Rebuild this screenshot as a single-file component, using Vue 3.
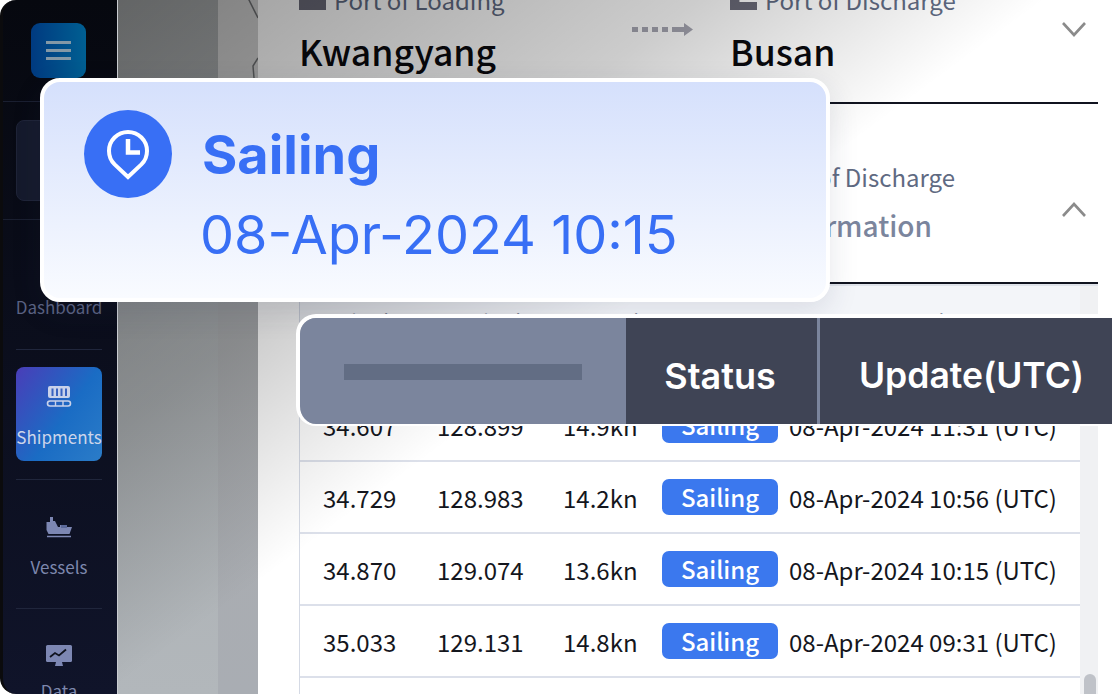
<script setup>
const rows = [
  { lat: '34.607', lon: '128.899', speed: '14.9kn', time: '08-Apr-2024 11:31 (UTC)' },
  { lat: '34.729', lon: '128.983', speed: '14.2kn', time: '08-Apr-2024 10:56 (UTC)' },
  { lat: '34.870', lon: '129.074', speed: '13.6kn', time: '08-Apr-2024 10:15 (UTC)' },
  { lat: '35.033', lon: '129.131', speed: '14.8kn', time: '08-Apr-2024 09:31 (UTC)' }
]
</script>

<template>
  <div class="screen">
    <aside class="sidebar">
      <div class="side-top">
        <div class="burger"><span></span><span></span><span></span></div>
      </div>
      <div class="side-box-wrap"><div class="side-box"></div></div>
      <div class="nav-item dash"><span>Dashboard</span></div>
      <div class="nav-item ship-wrap">
        <div class="active-tile">
          <svg width="26" height="22" viewBox="0 0 26 22" fill="none">
            <rect x="2" y="1" width="22" height="12" rx="2" fill="#c9d2ea"/>
            <path d="M6.5 3.5v7.5M11 3.5v7.5M15.5 3.5v7.5M20 3.5v7.5" stroke="#3a63c0" stroke-width="2"/>
            <rect x="1.5" y="16" width="23" height="5" rx="2.5" stroke="#c9d2ea" stroke-width="1.6"/>
            <path d="M9.5 16v5M17 16v5" stroke="#c9d2ea" stroke-width="1.4"/>
          </svg>
          <span>Shipments</span>
        </div>
      </div>
      <div class="nav-item vessels">
        <svg width="28" height="22" viewBox="0 0 28 22" fill="#7d87b3">
          <path d="M5 0h3v4h2l3 6h2V8h7v2h5l-2.500 7H3.500L1.500 13V5h3.500z"/>
          <rect x="16" y="8" width="6" height="3" fill="#5c6a9a"/>
          <path d="M2 19.500h24" stroke="#7d87b3" stroke-width="1.600" fill="none"/>
        </svg>
        <span>Vessels</span>
      </div>
      <div class="nav-item data">
        <svg width="28" height="24" viewBox="0 0 28 24">
          <rect x="1" y="1" width="26" height="17" rx="1.5" fill="#7d87b3"/>
          <path d="M5 13l5-4 4 2.500 7-6" stroke="#10131f" stroke-width="1.800" fill="none"/>
          <path d="M11 18h6l1 4h-8z" fill="#7d87b3"/>
        </svg>
        <span>Data</span>
      </div>
    </aside>

    <div class="map-a"></div>
    <div class="map-b">
      <svg class="map-lines" width="40" height="78" viewBox="0 0 40 78" fill="none">
        <path d="M30 -2l10 20M40 58l-5 8 1 12" stroke="#6e7072" stroke-width="1.500"/>
      </svg>
    </div>

    <main class="panel">
      <section class="route first">
        <div class="port">
          <div class="label"><i class="port-ic"></i>Port of Loading</div>
          <div class="name">Kwangyang</div>
        </div>
        <svg class="arrow" width="62" height="14" viewBox="0 0 62 14" fill="#a6a6b2">
          <rect x="0" y="5" width="6" height="5"/><rect x="10" y="5" width="6" height="5"/>
          <rect x="20" y="5" width="6" height="5"/><rect x="30" y="5" width="6" height="5"/>
          <path d="M40 5h12V1l9 6.500-9 6.500V10H40z"/>
        </svg>
        <div class="port second-port">
          <div class="label"><i class="port-ic mirror"></i>Port of Discharge</div>
          <div class="name">Busan</div>
        </div>
        <svg class="chev" width="26" height="18" viewBox="0 0 26 18" fill="none">
          <path d="M2 3l11 12L24 3" stroke="#8b8b8b" stroke-width="2.600"/>
        </svg>
      </section>

      <section class="route info">
        <div class="info-text">
          <div class="label">Port of Discharge</div>
          <div class="info-title">Information</div>
        </div>
        <svg class="chev up" width="26" height="18" viewBox="0 0 26 18" fill="none">
          <path d="M2 15L13 3l11 12" stroke="#8b8b8b" stroke-width="2.600"/>
        </svg>
      </section>

      <section class="table-wrap">
        <div class="table">
          <div class="thead">
            <span class="th-lat">Latitude</span>
            <span class="th-lon">Longitude</span>
            <span class="th-speed">Speed</span>
            <span class="th-status">Status</span>
            <span class="th-update">Update</span>
          </div>
          <div v-for="row in rows" :key="row.time" class="row">
            <span class="lat">{{ row.lat }}</span>
            <span class="lon">{{ row.lon }}</span>
            <span class="speed">{{ row.speed }}</span>
            <span class="badge">Sailing</span>
            <span class="time">{{ row.time }}</span>
          </div>
        </div>
        <div class="scroll"><div class="thumb"></div></div>
      </section>
    </main>

    <div class="shade"></div>

    <div class="float-card">
      <div class="pin-circle">
        <svg width="44" height="54" viewBox="0 0 44 54" fill="none">
          <path d="M22 50L8.600 37.400A19 19 0 1 1 35.400 37.400Z" stroke="#fff" stroke-width="4" stroke-linejoin="miter"/>
          <path d="M22 12v13.500h12" stroke="#fff" stroke-width="4.500"/>
        </svg>
      </div>
      <div class="float-text">
        <div class="float-status">Sailing</div>
        <div class="float-date">08-Apr-2024 10:15</div>
      </div>
    </div>

    <div class="float-head">
      <div class="head-blank"><div class="head-bar"></div></div>
      <div class="head-status">Status</div>
      <div class="head-update">Update(UTC)</div>
    </div>
  </div>
</template>

<style>
html, body { margin: 0; background: #fff; }
</style>

<style scoped>
.screen {
  position: relative;
  width: 1112px;
  height: 694px;
  overflow: hidden;
  display: flex;
  background: #fff;
  font-family: "Noto Sans CJK KR", "Noto Sans", sans-serif;
}
.sidebar {
  width: 118px;
  flex: none;
  height: 694px;
  box-sizing: border-box;
  padding: 0 15px 0 13px;
  border-right: 1px solid #c9ccd0;
  border-left: 3px solid #0b0b0d;
  background: linear-gradient(180deg, #06080f 0%, #10142a 100%);
  border-radius: 16px 0 0 16px;
  overflow: hidden;
  display: flex;
  flex-direction: column;
  color: #7d87ad;
}
.side-top {
  flex: none;
  border-bottom: 1px solid #1a1f30;
  margin: 0 -15px 0 -16px;
  padding-top: 23px;
  height: 78px;
  display: flex;
  justify-content: center;
}
.burger {
  width: 55px;
  height: 55px;
  border-radius: 9px;
  background: linear-gradient(90deg, #003a80, #005f92);
  display: flex;
  flex-direction: column;
  justify-content: center;
  align-items: center;
  gap: 5px;
}
.burger span { width: 25px; height: 3px; background: #8398a6; }
.side-box-wrap {
  height: 118px;
  flex: none;
  margin: 0 -15px 0 -16px;
  border-bottom: 1px solid #1a1f30;
  padding: 18px 15px 0 16px;
  box-sizing: border-box;
}
.side-box {
  height: 81px;
  border-radius: 8px;
  background: #151a2c;
  border: 1px solid #1f2438;
  box-sizing: border-box;
}
.nav-item {
  flex: none;
  display: flex;
  flex-direction: column;
  align-items: center;
  font-size: 17px;
  line-height: 24px;
  white-space: nowrap;
}
.dash {
  height: 130px;
  border-bottom: 1px solid #20263c;
  justify-content: flex-end;
  padding-bottom: 30px;
  box-sizing: border-box;
  color: #5a6282;
}
.ship-wrap {
  height: 130px;
  padding-top: 17px;
  box-sizing: border-box;
  border-bottom: 1px solid #20263c;
}
.active-tile {
  width: 86px;
  height: 94px;
  border-radius: 8px;
  background: linear-gradient(125deg, #4a3db8 0%, #1a6cc4 55%, #2b7cc8 100%);
  display: flex;
  flex-direction: column;
  align-items: center;
  color: #cdd5ea;
  padding-top: 18px;
  box-sizing: border-box;
  gap: 18px;
}
.vessels {
  height: 129px;
  padding-top: 37px;
  box-sizing: border-box;
  border-bottom: 1px solid #20263c;
  gap: 16px;
}
.data {
  padding-top: 35px;
  gap: 11px;
}
.map-a {
  width: 100px;
  flex: none;
  background: linear-gradient(180deg, #a5a8a9 0%, #b2b7bb 100%);
}
.map-b {
  width: 40px;
  flex: none;
  position: relative;
  background: linear-gradient(180deg, #d0d0d0 0%, #d0d0d0 12%, #aaacae 44%, #a9adb3 100%);
}
.map-lines { position: absolute; left: 0; top: 0; }
.panel {
  flex: 1;
  min-width: 0;
  padding: 0 14px 0 41px;
  background: #fff;
  display: flex;
  flex-direction: column;
}
.route {
  display: flex;
  position: relative;
  border-bottom: 2px solid #10131f;
  box-sizing: border-box;
  flex: none;
}
.first {
  height: 124px;
  margin-top: -20px;
  padding-top: 5px;
}
.info {
  height: 180px;
}
.label {
  display: flex;
  align-items: center;
  gap: 8px;
  font-size: 24px;
  line-height: 30px;
  color: #5f6a82;
  white-space: nowrap;
}
.port-ic {
  display: block;
  width: 27px;
  height: 20px;
  background: #6a6a78;
  clip-path: polygon(0 35%, 60% 35%, 100% 0, 100% 100%, 0 100%);
}
.port-ic.mirror { clip-path: polygon(0 0, 35% 0, 35% 60%, 100% 60%, 100% 100%, 0 100%); }
.name {
  font-size: 35.500px;
  line-height: 44px;
  font-weight: 500;
  color: #0a0a0e;
  margin-top: 14px;
}
.port { width: 333px; flex: none; }
.arrow { position: absolute; left: 333px; top: 42px; }
.second-port { margin-left: 98px; }
.chev { position: absolute; right: 11px; top: 40px; }
.up { top: 97px; }
.info-text {
  position: absolute;
  right: 143px;
  top: 58px;
  text-align: right;
}
.info-title {
  font-size: 28px;
  line-height: 40px;
  font-weight: 500;
  color: #7b859d;
  margin-top: 13px;
  margin-right: 23px;
}
.table-wrap {
  flex: 1;
  display: flex;
  min-height: 0;
  overflow: hidden;
  border-top: 2px solid #dfe3ea;
}
.table {
  flex: 1;
  min-width: 0;
  border-left: 2px solid #d5dae5;
  margin-left: -1px;
}
.thead {
  height: 104px;
  box-sizing: border-box;
  padding-top: 21px;
  background: #f3f5f9;
  display: flex;
  font-size: 20px;
  line-height: 28px;
  color: #6a7285;
  white-space: nowrap;
}
.th-lat { width: 115px; flex: none; padding-left: 22px; }
.th-lon { width: 143px; flex: none; }
.th-speed { width: 120px; flex: none; }
.th-status { width: 205px; flex: none; }
.row {
  height: 72px;
  display: flex;
  align-items: center;
  box-sizing: border-box;
  border-bottom: 2px solid #dce0ea;
  font-size: 24px;
  color: #14161d;
  white-space: nowrap;
}
.lat { width: 114px; flex: none; padding-left: 23px; }
.lon { width: 126px; flex: none; }
.speed { width: 99px; flex: none; }
.badge {
  width: 116px;
  height: 36px;
  flex: none;
  border-radius: 7px;
  background: #3b78ee;
  color: #fff;
  font-weight: 500;
  text-align: center;
  line-height: 36px;
}
.time { margin-left: 11px; }
.scroll {
  width: 18px;
  flex: none;
  background: #f0f1f3;
  position: relative;
}
.thumb {
  position: absolute;
  left: 4px;
  right: 2px;
  top: 388px;
  height: 40px;
  border-radius: 6px;
  background: #bfc2c8;
}
.shade {
  position: absolute;
  left: 118px;
  right: 0;
  top: 0;
  bottom: 0;
  pointer-events: none;
  background: linear-gradient(143.500deg, rgba(0, 0, 0, 0.4) 0%, rgba(0, 0, 0, 0.35) 7%, rgba(0, 0, 0, 0.2) 30%, rgba(0, 0, 0, 0) 48%);
}
.float-card {
  position: absolute;
  left: 40px;
  top: 78px;
  width: 790px;
  height: 224px;
  box-sizing: border-box;
  border: 4px solid #fff;
  border-radius: 20px;
  background: linear-gradient(180deg, #d5e0fc 0%, #f9fbff 100%);
  display: flex;
  padding: 28px 0 0 40px;
  gap: 30px;
  font-family: Inter, sans-serif;
  color: #386ff5;
  box-shadow: 0 10px 30px rgba(40, 50, 80, 0.12);
}
.pin-circle {
  width: 88px;
  height: 88px;
  flex: none;
  border-radius: 50%;
  background: #386ff5;
  display: flex;
  align-items: center;
  justify-content: center;
}
.float-status {
  font-size: 54px;
  line-height: 64px;
  font-weight: 700;
  margin-top: 13px;
}
.float-date {
  font-size: 54px;
  line-height: 64px;
  font-weight: 400;
  margin: 16px 0 0 -2px;
}
.float-head {
  position: absolute;
  left: 296px;
  top: 314px;
  right: -20px;
  height: 112px;
  box-sizing: border-box;
  border: 4px solid #fff;
  border-bottom-width: 2px;
  border-radius: 20px 0 0 20px;
  display: flex;
  overflow: hidden;
  font-family: Inter, sans-serif;
  font-size: 36px;
  font-weight: 600;
  color: #fff;
}
.head-blank {
  width: 326px;
  flex: none;
  background: #7b859d;
  display: flex;
  align-items: center;
  padding: 2px 0 0 44px;
  box-sizing: border-box;
}
.head-bar { width: 238px; height: 16px; background: #626d84; }
.head-status {
  width: 194px;
  flex: none;
  background: #3f4455;
  border-right: 3px solid #7b859d;
  box-sizing: border-box;
  text-align: center;
  line-height: 116px;
  padding-right: 3px;
}
.head-update {
  flex: 1;
  background: #3f4455;
  font-size: 35.500px;
  line-height: 116px;
  padding-left: 39px;
}
</style>
